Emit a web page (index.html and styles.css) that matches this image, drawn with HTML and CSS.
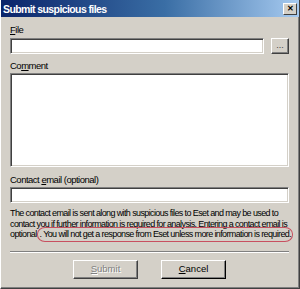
FILE: index.html
```html
<!DOCTYPE html>
<html lang="en">
<head>
    <meta charset="UTF-8">
    <title>Submit suspicious files</title>
    <link rel="stylesheet" href="styles.css">
</head>
<body>
    <div class="window">
        <div class="titlebar">
            <span class="title">Submit suspicious files</span>
            <span class="close">&#x2715;</span>
        </div>
        <div class="content">
            <label class="label label-file"><u>F</u>ile</label>
            <div class="file-row">
                <div class="field file-field"></div>
                <div class="btn browse">...</div>
            </div>

            <label class="label label-comment">Co<u>m</u>ment</label>
            <div class="field comment"></div>

            <label class="label label-email">Contact <u>e</u>mail (optional)</label>
            <div class="field email"></div>

            <p class="note">The contact email is sent along with suspicious files to Eset and may be used to<br>contact you if further information is required for analysis. Entering a contact email is<br>optional<span class="mark">. You will not get a response from Eset unless more information is required.</span></p>

            <div class="separator"></div>

            <div class="buttons">
                <div class="btn action disabled"><u>S</u>ubmit</div>
                <div class="btn action default"><u>C</u>ancel</div>
            </div>
        </div>
    </div>
</body>
</html>
```

FILE: styles.css
```css
body {
    margin: 0;
    background: #d4d0c8;
    font-family: 'Liberation Sans', Arial, sans-serif;
    font-size: 9px;
    color: #000;
}

.window {
    width: 300px;
    height: 289px;
    box-sizing: border-box;
    border-left: 1px solid #fff;
    border-bottom: 1px solid #404040;
    border-right: 1px solid #404040;
    box-shadow: inset -1px -1px #808080, inset 1px 0 #d4d0c8;
    background: #d4d0c8;
    overflow: hidden;
}

.titlebar {
    height: 17px;
    display: flex;
    align-items: center;
    justify-content: space-between;
    padding: 0 2px 0 2px;
    background: linear-gradient(to right, #0a246a, #3a6ea5 55%, #a6caf0);
}

.title {
    color: #fff;
    font-weight: bold;
    font-size: 10.5px;
    letter-spacing: -0.6px;
}

.close {
    width: 12px;
    height: 10px;
    line-height: 10px;
    text-align: center;
    font-size: 8px;
    font-weight: bold;
    background: #d4d0c8;
    border-top: 1px solid #fff;
    border-left: 1px solid #fff;
    border-right: 1px solid #404040;
    border-bottom: 1px solid #404040;
}

.content {
    padding: 0 10px 0 9px;
}

.label {
    display: block;
    height: 11px;
    line-height: 11px;
    font-size: 9.5px;
    letter-spacing: -0.5px;
}

.label-file {
    margin-top: 7px;
}

.label-comment {
    margin-top: 6px;
}

.label-email {
    margin-top: 7px;
}

.field {
    background: #fff;
    box-sizing: border-box;
    border-top: 1px solid #808080;
    border-left: 1px solid #808080;
    border-right: 1px solid #fff;
    border-bottom: 1px solid #fff;
    box-shadow: inset 1px 1px #404040, inset -1px -1px #d4d0c8;
}

.file-row {
    display: flex;
    gap: 7px;
    margin-top: 3px;
}

.file-field {
    flex: 1;
    height: 16px;
}

.btn {
    box-sizing: border-box;
    background: #d4d0c8;
    border-top: 1px solid #fff;
    border-left: 1px solid #fff;
    border-right: 1px solid #404040;
    border-bottom: 1px solid #404040;
    box-shadow: inset -1px -1px #808080;
    text-align: center;
}

.browse {
    width: 18px;
    height: 16px;
    line-height: 12px;
    font-size: 9px;
    color: #404040;
}

.comment {
    height: 94px;
    margin-top: 2px;
}

.email {
    height: 16px;
    margin-top: 2px;
}

.note {
    margin: 5px 0 0;
    line-height: 10.5px;
    letter-spacing: -0.62px;
    white-space: nowrap;
}

.mark {
    border: 1px solid #c85060;
    border-radius: 8px / 7px;
    padding: 1px 1px 2px 2px;
}

.separator {
    margin-top: 11px;
    height: 0;
    border-top: 1px solid #808080;
    border-bottom: 1px solid #fff;
}

.buttons {
    display: flex;
    justify-content: center;
    gap: 23px;
    margin-top: 7px;
}

.action {
    width: 65px;
    height: 19px;
    line-height: 16px;
    font-size: 9.5px;
}

.disabled {
    color: #808080;
    text-shadow: 1px 1px #fff;
}

.default {
    border-right-color: #000;
    border-bottom-color: #000;
}
```
